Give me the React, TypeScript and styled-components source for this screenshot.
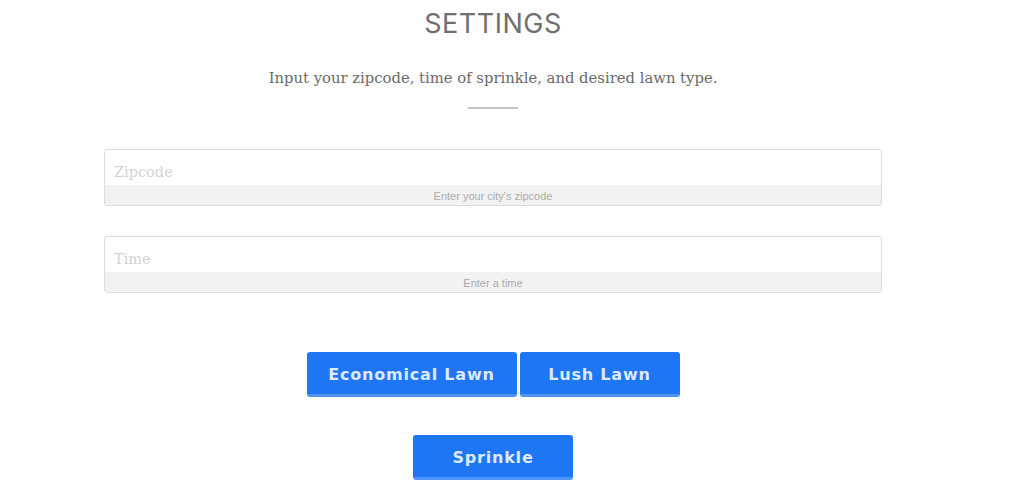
import styled, { createGlobalStyle } from 'styled-components';

const GlobalStyle = createGlobalStyle`
  html, body {
    margin: 0;
    padding: 0;
    background: #ffffff;
  }
`;

const Page = styled.div`
  width: 986px;
  display: flex;
  flex-direction: column;
  align-items: center;
`;

const Title = styled.h1`
  margin: 8px 0 0;
  font-family: 'Inter', 'Liberation Sans', sans-serif;
  font-weight: 400;
  font-size: 27px;
  letter-spacing: 0.5px;
  line-height: 32px;
  color: #6f6f6f;
`;

const Subtitle = styled.p`
  margin: 28px 0 0;
  font-family: 'DejaVu Serif', 'Liberation Serif', serif;
  font-size: 14.8px;
  line-height: 20px;
  color: #6a6a6a;
`;

const Divider = styled.hr`
  width: 50px;
  height: 2px;
  margin: 19px 0 0;
  border: none;
  background: #c4c4c8;
`;

const Form = styled.div`
  width: 778px;
  display: flex;
  flex-direction: column;
  gap: 30px;
  margin-top: 40px;
`;

const Field = styled.label`
  display: flex;
  flex-direction: column;
  height: 57px;
  box-sizing: border-box;
  border: 1px solid #dcdcdc;
  border-radius: 3px;
  overflow: hidden;
`;

const Input = styled.input`
  height: 35px;
  box-sizing: border-box;
  padding: 9px 9px 0;
  border: none;
  outline: none;
  background: #ffffff;
  font-family: 'DejaVu Serif', 'Liberation Serif', serif;
  font-size: 14.5px;
  color: #444;

  &::placeholder {
    color: #d3d3d3;
  }
`;

const Hint = styled.span`
  flex: 1;
  display: flex;
  align-items: center;
  justify-content: center;
  padding-top: 2px;
  background: #f2f2f2;
  font-family: 'Liberation Sans', Arial, sans-serif;
  font-size: 11px;
  color: #ababab;
`;

const ButtonRow = styled.div`
  display: flex;
  gap: 3px;
  margin-top: 59px;
`;

const Button = styled.button<{ width: number }>`
  width: ${(p) => p.width}px;
  height: 45px;
  box-sizing: border-box;
  border: none;
  border-bottom: 3px solid #4f95f8;
  border-radius: 3px;
  background: #1f76f5;
  color: #dce9ff;
  font-family: 'DejaVu Sans', 'Liberation Sans', sans-serif;
  font-weight: 700;
  font-size: 16px;
  letter-spacing: 0.8px;
  padding: 3px 0 0;
  cursor: pointer;
`;

const SprinkleWrap = styled.div`
  margin-top: 38px;
`;

export default function App() {
  return (
    <>
      <GlobalStyle />
      <Page>
        <Title>SETTINGS</Title>
        <Subtitle>Input your zipcode, time of sprinkle, and desired lawn type.</Subtitle>
        <Divider />
        <Form>
          <Field>
            <Input placeholder="Zipcode" />
            <Hint>Enter your city's zipcode</Hint>
          </Field>
          <Field>
            <Input placeholder="Time" />
            <Hint>Enter a time</Hint>
          </Field>
        </Form>
        <ButtonRow>
          <Button width={210}>Economical Lawn</Button>
          <Button width={160}>Lush Lawn</Button>
        </ButtonRow>
        <SprinkleWrap>
          <Button width={160}>Sprinkle</Button>
        </SprinkleWrap>
      </Page>
    </>
  );
}
